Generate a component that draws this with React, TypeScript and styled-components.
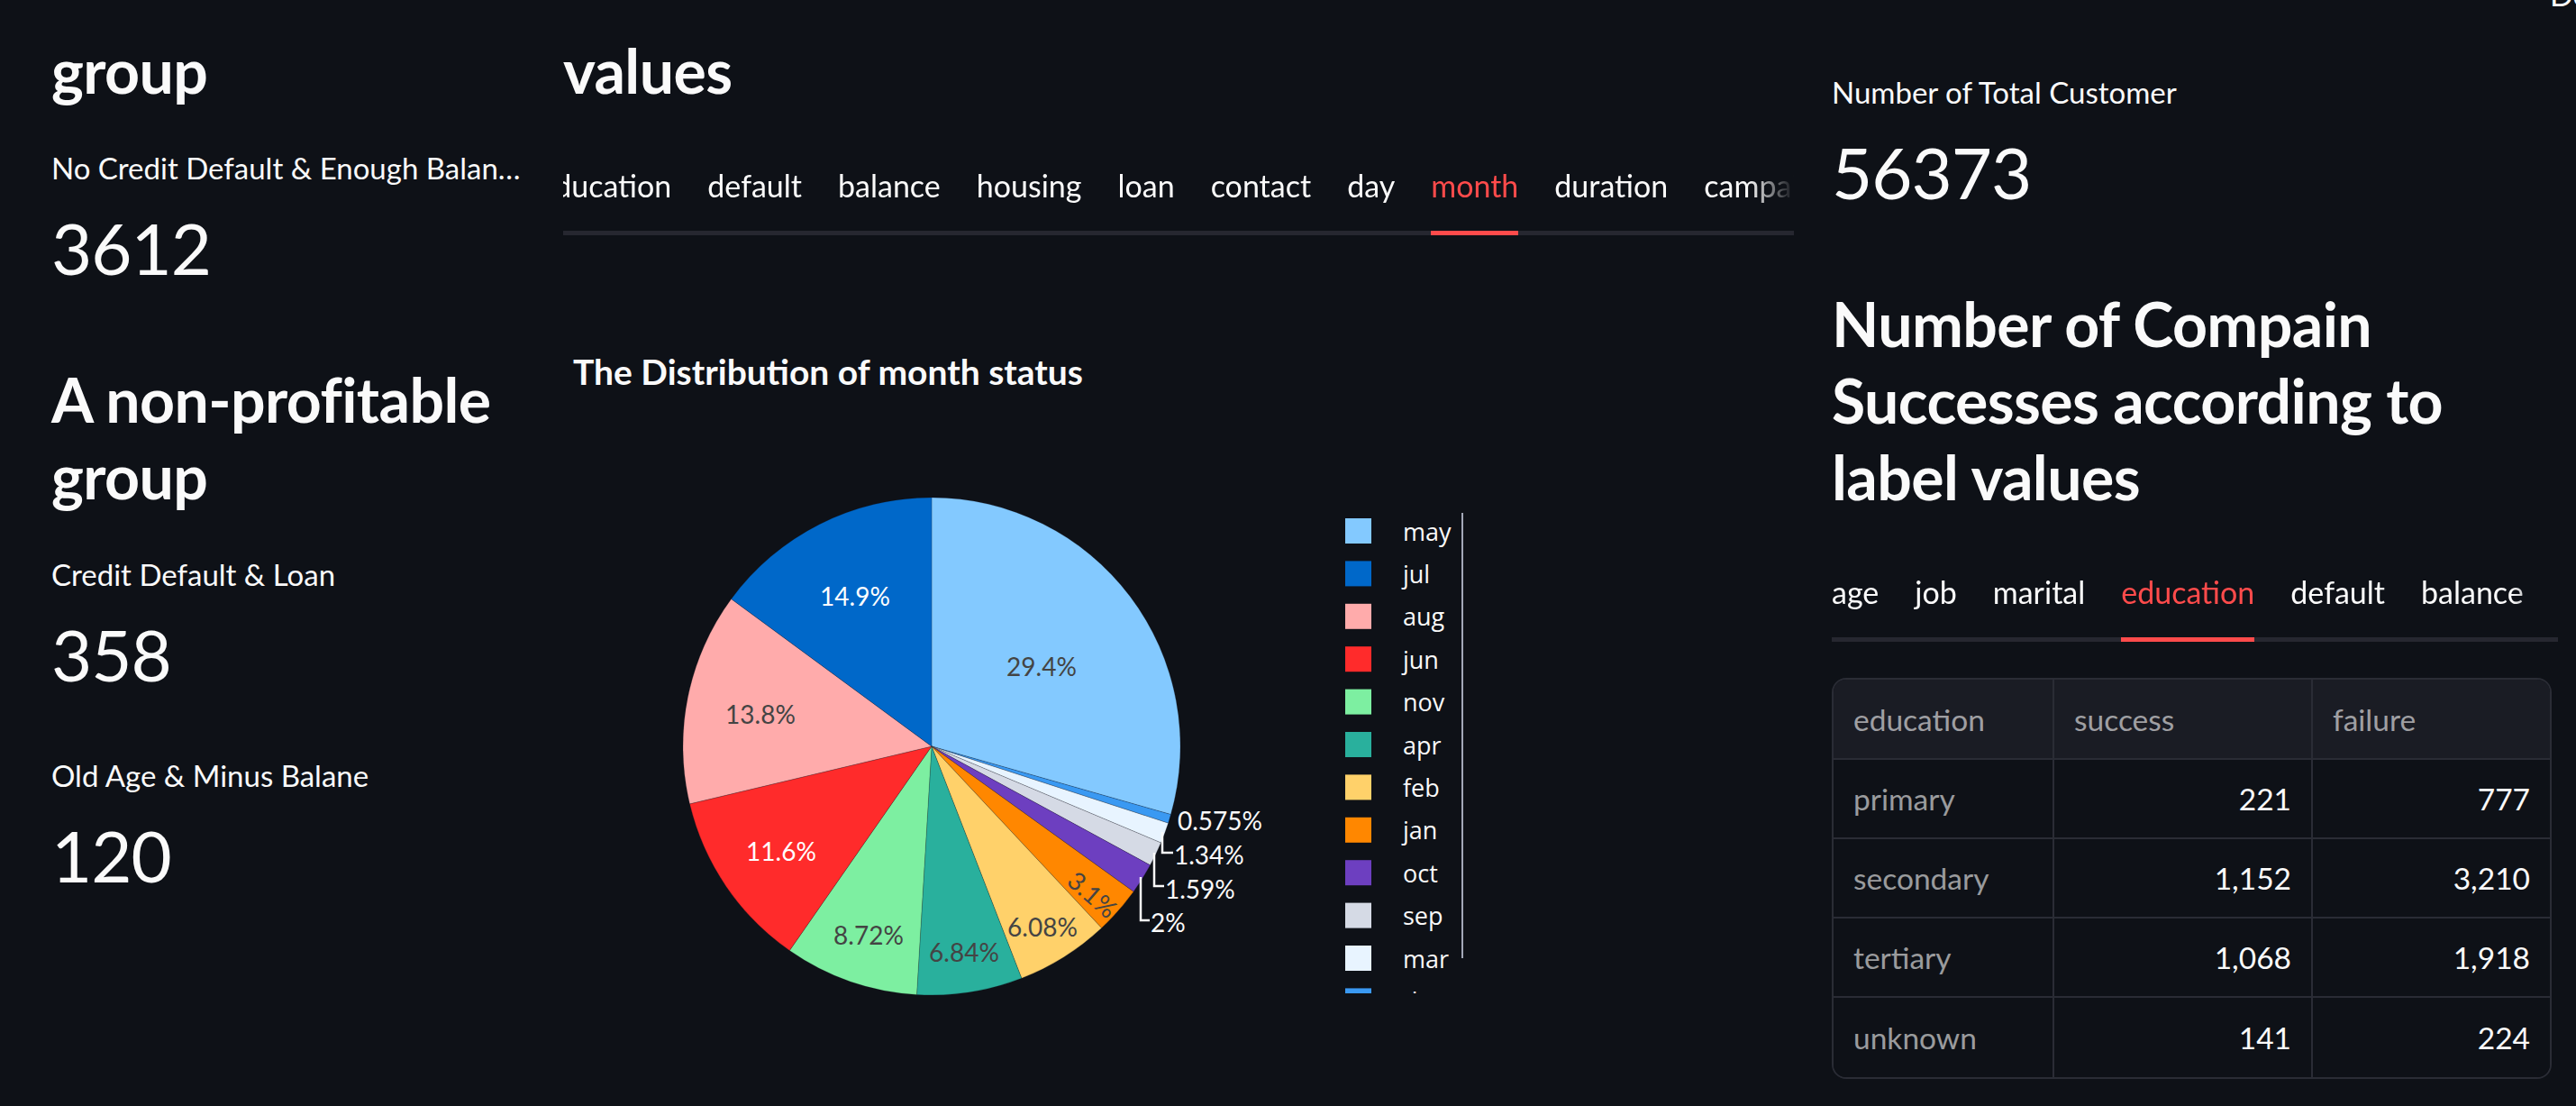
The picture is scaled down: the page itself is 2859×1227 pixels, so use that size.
import React, { useLayoutEffect, useRef } from "react"
import styled, { createGlobalStyle } from "styled-components"

const GlobalStyle = createGlobalStyle`
  html, body {
    margin: 0;
    padding: 0;
    background: #0e1117;
  }
  body {
    font-family: Lato, "Noto Sans", sans-serif;
    color: #fafafa;
    overflow: hidden;
  }
`

const Page = styled.div`
  position: relative;
  display: flex;
  align-items: flex-start;
  gap: 42px;
  width: 2859px;
  height: 1227px;
  padding: 0 20px 0 57px;
  box-sizing: border-box;
  overflow: hidden;
`

// bit of the deploy button peeking in at the top right
const HeaderPeek = styled.div`
  position: absolute;
  top: -27px;
  left: 2830px;
  font-size: 34px;
  color: #fafafa;
`

const Column = styled.div<{ $width: number }>`
  display: flex;
  flex-direction: column;
  width: ${p => p.$width}px;
  flex: none;
  min-width: 0;
`

const Heading = styled.h3<{ $top: number }>`
  margin: ${p => p.$top}px 0 0;
  font-size: 68px;
  font-weight: 700;
  line-height: 85px;
  letter-spacing: -0.6px;
`

const MetricBox = styled.div<{ $top: number }>`
  display: flex;
  flex-direction: column;
  margin-top: ${p => p.$top}px;
  min-width: 0;
`

const MetricLabel = styled.div`
  font-size: 33px;
  line-height: 44px;
  white-space: nowrap;
  overflow: hidden;
  text-overflow: ellipsis;
`

const MetricValue = styled.div`
  margin-top: 17px;
  font-size: 78px;
  line-height: 100px;
  letter-spacing: -1px;
`

// grey rail under the tabs, not faded
const TabBar = styled.div<{ $top: number }>`
  margin-top: ${p => p.$top}px;
  box-shadow: inset 0 -5px 0 #262730;
`

const TabScroller = styled.div`
  position: relative;
  overflow: hidden;
  -webkit-mask-image: linear-gradient(to right, #000 calc(100% - 50px), transparent);
  mask-image: linear-gradient(to right, #000 calc(100% - 50px), transparent);
`

const TabRow = styled.div`
  display: flex;
  gap: 40px;
  width: max-content;
`

const Tab = styled.div<{ $active?: boolean }>`
  font-size: 34px;
  line-height: 44px;
  padding-bottom: 28px;
  white-space: nowrap;
  color: ${p => (p.$active ? "#ff4b4b" : "#fafafa")};
  border-bottom: 5px solid ${p => (p.$active ? "#ff4b4b" : "transparent")};
`

const ChartTitle = styled.div`
  margin-top: 126px;
  padding-left: 11px;
  font-size: 39px;
  font-weight: 700;
  line-height: 50px;
`

const ChartSvg = styled.svg`
  display: block;
  margin-top: 33px;
`

const TableFrame = styled.div`
  margin-top: 40px;
  width: 795px;
  border: 2px solid #2a2c35;
  border-radius: 16px;
  overflow: hidden;
  display: grid;
  grid-template-columns: 245px 287px 1fr;
`

const Cell = styled.div<{ $head?: boolean; $num?: boolean; $last?: boolean; $bottom?: boolean }>`
  height: ${p => (p.$head ? 89 : 88)}px;
  display: flex;
  align-items: center;
  justify-content: ${p => (p.$num ? "flex-end" : "flex-start")};
  padding: 0 22px;
  box-sizing: border-box;
  font-size: 33.5px;
  background: ${p => (p.$head ? "#1a1c24" : "#0e1117")};
  color: ${p => (p.$num ? "#fafafa" : "rgba(250, 250, 250, 0.6)")};
  border-right: ${p => (p.$last ? "none" : "2px solid #2a2c35")};
  border-bottom: ${p => (p.$bottom ? "none" : "2px solid #2a2c35")};
`

const allTabs = [
  "age", "job", "marital", "education", "default", "balance", "housing", "loan",
  "contact", "day", "month", "duration", "campaign", "pdays", "previous", "poutcome",
]

interface TabsProps {
  active: string
  top: number
  activeLeft?: number
}

const Tabs: React.FC<TabsProps> = ({ active, top, activeLeft }) => {
  const scroller = useRef<HTMLDivElement>(null)
  const activeTab = useRef<HTMLDivElement>(null)

  useLayoutEffect(() => {
    if (activeLeft === undefined || !scroller.current || !activeTab.current) return
    scroller.current.scrollLeft = activeTab.current.offsetLeft - activeLeft
  }, [activeLeft])

  return (
    <TabBar $top={top}>
      <TabScroller ref={scroller}>
        <TabRow>
          {allTabs.map(t => (
            <Tab key={t} $active={t === active} ref={t === active ? activeTab : undefined}>
              {t}
            </Tab>
          ))}
        </TabRow>
      </TabScroller>
    </TabBar>
  )
}

const Metric: React.FC<{ label: string; value: string; top: number }> = ({ label, value, top }) => (
  <MetricBox $top={top}>
    <MetricLabel>{label}</MetricLabel>
    <MetricValue>{value}</MetricValue>
  </MetricBox>
)

// clockwise from 12 o'clock, like the plotly output
const slices = [
  { name: "may", pct: 29.4, color: "#83c9ff" },
  { name: "dec", pct: 0.575, color: "#3a99f2" },
  { name: "mar", pct: 1.34, color: "#e8f4ff" },
  { name: "sep", pct: 1.59, color: "#d5dae5" },
  { name: "oct", pct: 2, color: "#6d3fc0" },
  { name: "jan", pct: 3.1, color: "#ff8700" },
  { name: "feb", pct: 6.08, color: "#ffd16a" },
  { name: "apr", pct: 6.84, color: "#29b09d" },
  { name: "nov", pct: 8.72, color: "#7defa1" },
  { name: "jun", pct: 11.6, color: "#ff2b2b" },
  { name: "aug", pct: 13.8, color: "#ffabab" },
  { name: "jul", pct: 14.9, color: "#0068c9" },
]

const legendOrder = ["may", "jul", "aug", "jun", "nov", "apr", "feb", "jan", "oct", "sep", "mar", "dec"]

const insideLabels = [
  { text: "29.4%", x: 531, y: 269, fill: "#444" },
  { text: "14.9%", x: 324, y: 191, fill: "#fff" },
  { text: "13.8%", x: 219, y: 322, fill: "#444" },
  { text: "11.6%", x: 242, y: 474, fill: "#fff" },
  { text: "8.72%", x: 339, y: 567, fill: "#444" },
  { text: "6.84%", x: 445, y: 586, fill: "#444" },
  { text: "6.08%", x: 532, y: 558, fill: "#444" },
]

const outsideLabels = [
  { text: "0.575%", x: 682, y: 440, line: "" },
  { text: "1.34%", x: 678, y: 478, line: "M665,453 L665,476 L677,476" },
  { text: "1.59%", x: 668, y: 516, line: "M656,476 L656,513 L667,513" },
  { text: "2%", x: 652, y: 553, line: "M641,503 L641,551 L651,551" },
]

const CX = 409
const CY = 358
const R = 276

const point = (deg: number): [number, number] => {
  const a = (deg * Math.PI) / 180
  return [CX + R * Math.sin(a), CY - R * Math.cos(a)]
}

const slicePath = (a0: number, a1: number) => {
  const [x0, y0] = point(a0)
  const [x1, y1] = point(a1)
  const large = a1 - a0 > 180 ? 1 : 0
  return `M${CX},${CY} L${x0},${y0} A${R},${R} 0 ${large} 1 ${x1},${y1} Z`
}

const PieChart: React.FC = () => {
  const total = slices.reduce((s, d) => s + d.pct, 0)
  let acc = 0
  const arcs = slices.map(d => {
    const a0 = (acc / total) * 360
    acc += d.pct
    const a1 = (acc / total) * 360
    return { ...d, path: slicePath(a0, a1) }
  })
  const colorOf = (n: string) => slices.find(s => s.name === n)!.color

  return (
    <ChartSvg width={1366} height={757} viewBox="0 0 1366 757">
      <defs>
        <clipPath id="legendClip">
          <rect x={850} y={80} width={200} height={552} />
        </clipPath>
      </defs>
      {arcs.map(a => (
        <path key={a.name} d={a.path} fill={a.color} stroke="#0e1117" strokeOpacity={0.25} strokeWidth={0.8} />
      ))}
      <g fontFamily="Lato, sans-serif" fontSize={28} textAnchor="middle" dominantBaseline="central">
        {insideLabels.map(l => (
          <text key={l.text} x={l.x} y={l.y} fill={l.fill}>
            {l.text}
          </text>
        ))}
        <text x={588} y={522} fill="#444" transform="rotate(41 588 522)">
          3.1%
        </text>
      </g>
      <g fontFamily="Lato, sans-serif" fontSize={28} fill="#fafafa" dominantBaseline="central">
        {outsideLabels.map(l => (
          <g key={l.text}>
            {l.line && <path d={l.line} stroke="#fafafa" strokeWidth={2.5} fill="none" />}
            <text x={l.x} y={l.y}>
              {l.text}
            </text>
          </g>
        ))}
      </g>
      <g clipPath="url(#legendClip)" fontFamily="'Open Sans', sans-serif" fontSize={27} fill="#fafafa">
        {legendOrder.map((n, i) => {
          const y = 119 + i * 47.4
          return (
            <g key={n}>
              <rect x={868} y={y - 14} width={29} height={28} fill={colorOf(n)} />
              <text x={932} y={y} dominantBaseline="central">
                {n}
              </text>
            </g>
          )
        })}
      </g>
      <rect x={997} y={99} width={2} height={494} fill="#a3a8b8" />
    </ChartSvg>
  )
}

const rows = [
  ["primary", "221", "777"],
  ["secondary", "1,152", "3,210"],
  ["tertiary", "1,068", "1,918"],
  ["unknown", "141", "224"],
]

const ResultTable: React.FC = () => (
  <TableFrame>
    <Cell $head>education</Cell>
    <Cell $head>success</Cell>
    <Cell $head $last>failure</Cell>
    {rows.map((r, i) => (
      <React.Fragment key={r[0]}>
        <Cell $bottom={i === rows.length - 1}>{r[0]}</Cell>
        <Cell $num $bottom={i === rows.length - 1}>{r[1]}</Cell>
        <Cell $num $last $bottom={i === rows.length - 1}>{r[2]}</Cell>
      </React.Fragment>
    ))}
  </TableFrame>
)

const App: React.FC = () => {
  return (
    <>
      <GlobalStyle />
      <Page>
        <HeaderPeek>Deploy</HeaderPeek>
        <Column $width={526}>
          <Heading $top={35}>group</Heading>
          <Metric top={44} label="No Credit Default & Enough Balance" value="3612" />
          <Heading $top={75}>A non-profitable group</Heading>
          <Metric top={45} label="Credit Default & Loan" value="358" />
          <Metric top={62} label="Old Age & Minus Balane" value="120" />
        </Column>
        <Column $width={1366}>
          <Heading $top={35}>values</Heading>
          <Tabs top={64} active="month" activeLeft={963} />
          <ChartTitle>The Distribution of month status</ChartTitle>
          <PieChart />
        </Column>
        <Column $width={806}>
          <Metric top={80} label="Number of Total Customer" value="56373" />
          <Heading $top={75}>Number of Compain Successes according to label values</Heading>
          <Tabs top={64} active="education" />
          <ResultTable />
        </Column>
      </Page>
    </>
  )
}

export default App
